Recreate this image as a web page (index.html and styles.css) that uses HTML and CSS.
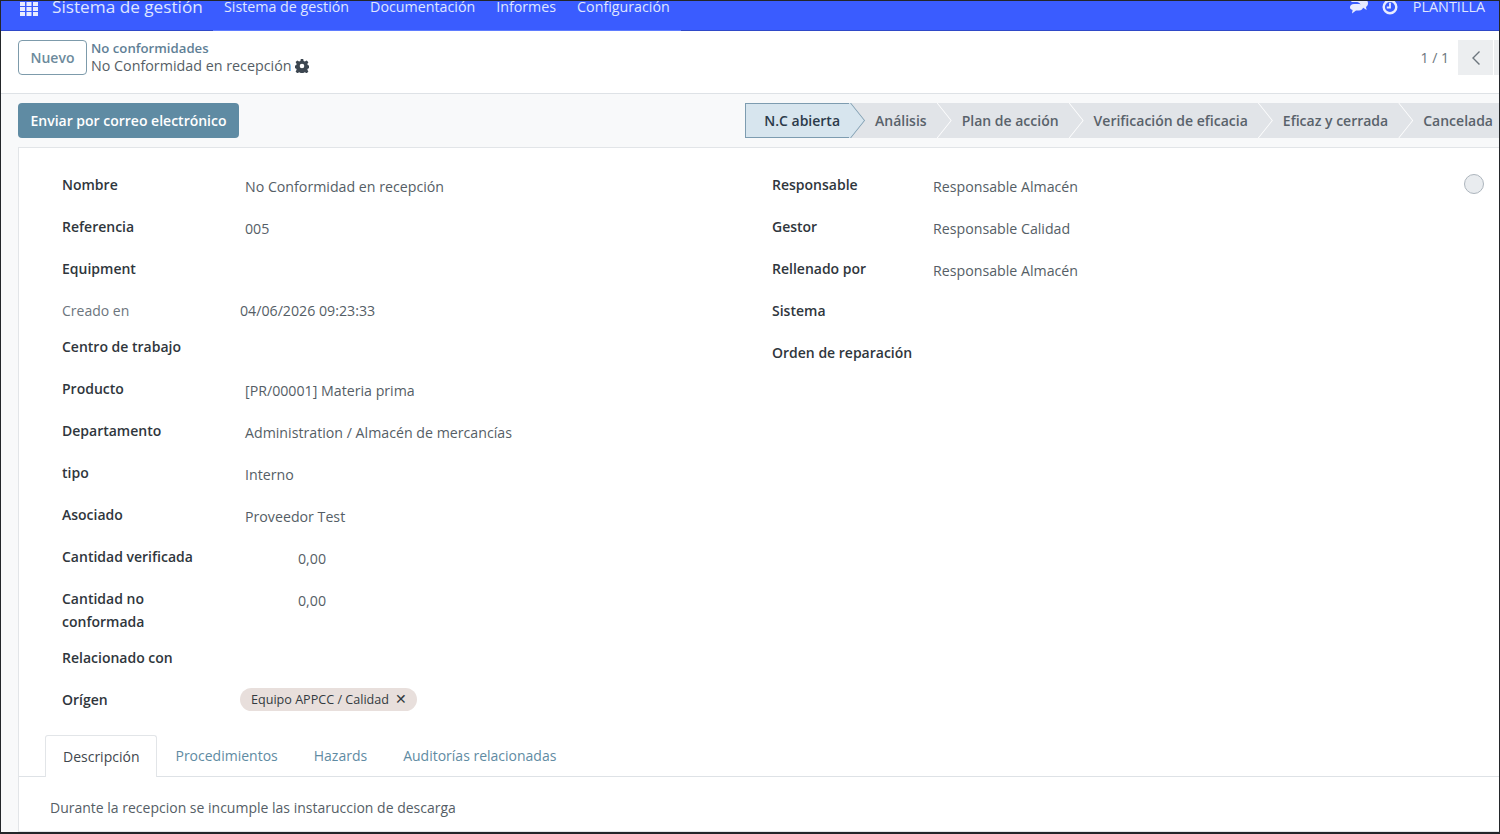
FILE: index.html
```html
<!DOCTYPE html>
<html lang="es">
  <head>
    <meta charset="UTF-8" />
    <title>No Conformidad en recepción</title>
    <link rel="stylesheet" href="styles.css">
  </head>

  <body>
    <div class="screen">
      <header class="navbar">
        <svg class="apps" viewBox="0 0 18 14" width="18" height="14">
          <path d="M0 0h5v4H0zM6.500 0h5v4h-5zM13 0h5v4h-5zM0 5h5v4H0zM6.500 5h5v4h-5zM13 5h5v4h-5zM0 10h5v4H0zM6.500 10h5v4h-5zM13 10h5v4h-5z" fill="#e8ecff" />
        </svg>
        <span class="brand">Sistema de gestión</span>
        <nav class="menu">
          <a>Sistema de gestión</a>
          <a>Documentación</a>
          <a>Informes</a>
          <a>Configuración</a>
        </nav>
        <div class="systray">
          <svg class="icon-chat" viewBox="0 0 20 16" width="20" height="16">
            <path d="M7 0h8c3 0 5 1.600 5 4.200 0 1.800-.8 3-2 3.800l.6 3-3.400-2.300H13c.4-3.500-1.800-5.700-5-5.700H3.200C3.600 1.100 5 0 7 0z" fill="#e8ecff" />
            <path d="M6 5h5c2.500 0 4 1.300 4 3.200s-1.500 3.300-4 3.300H8l-4 3 .6-3.500C2.800 10.500 2 9.500 2 8.200 2 6.300 3.500 5 6 5z" fill="#e8ecff" />
          </svg>
          <svg class="icon-clock" viewBox="0 0 16 16" width="16" height="16">
            <circle cx="8" cy="8" r="6.300" fill="none" stroke="#e8ecff" stroke-width="2.400" />
            <path d="M8 3.800v4.700H4.800" fill="none" stroke="#e8ecff" stroke-width="1.800" />
          </svg>
          <span class="user">PLANTILLA</span>
        </div>
      </header>

      <section class="control">
        <button class="btn-new">Nuevo</button>
        <div class="crumbs">
          <a class="crumb-link">No conformidades</a>
          <div class="crumb-current">
            No Conformidad en recepción
            <svg viewBox="0 0 14 14" width="14" height="14">
              <path d="M5.800 0h2.400l.4 2 1.300.6 1.800-1.100 1.700 1.700-1.100 1.800.6 1.300 2 .4v2.400l-2 .4-.6 1.300 1.100 1.800-1.700 1.700-1.800-1.100-1.300.6-.4 2H5.800l-.4-2-1.300-.6-1.800 1.100L.6 12.500l1.100-1.800-.6-1.300-2-.4V6.600l2-.4.6-1.300L.6 3.100l1.700-1.700 1.800 1.100 1.300-.6zM7 4.700a2.300 2.300 0 1 0 0 4.600 2.300 2.300 0 0 0 0-4.600z" fill="#3c4650" fill-rule="evenodd" />
            </svg>
          </div>
        </div>
        <div class="pager">
          <span>1 / 1</span>
          <div class="pager-btn">
            <svg viewBox="0 0 10 16" width="10" height="16">
              <path d="M8.500 1.500 2 8l6.500 6.500" fill="none" stroke="#6c757d" stroke-width="1.400" />
            </svg>
          </div>
          <div class="pager-btn"></div>
        </div>
      </section>

      <section class="actions">
        <button class="btn-send">Enviar por correo electrónico</button>
        <div class="status">
          <div class="step active">N.C abierta</div>
          <div class="step">Análisis</div>
          <div class="step">Plan de acción</div>
          <div class="step">Verificación de eficacia</div>
          <div class="step">Eficaz y cerrada</div>
          <div class="step">Cancelada</div>
        </div>
      </section>

      <main class="sheet">
        <div class="dot"></div>
        <div class="columns">
          <div class="col-left">
            <div class="row"><label>Nombre</label><span class="val">No Conformidad en recepción</span></div>
            <div class="row"><label>Referencia</label><span class="val">005</span></div>
            <div class="row"><label>Equipment</label></div>
            <div class="row row-short"><label class="muted">Creado en</label><span class="val val-date">04/06/2026 09:23:33</span></div>
            <div class="row"><label>Centro de trabajo</label></div>
            <div class="row"><label>Producto</label><span class="val">[PR/00001] Materia prima</span></div>
            <div class="row"><label>Departamento</label><span class="val">Administration / Almacén de mercancías</span></div>
            <div class="row"><label>tipo</label><span class="val">Interno</span></div>
            <div class="row"><label>Asociado</label><span class="val">Proveedor Test</span></div>
            <div class="row"><label>Cantidad verificada</label><span class="val val-num">0,00</span></div>
            <div class="row row-tall"><label>Cantidad no conformada</label><span class="val val-num">0,00</span></div>
            <div class="row"><label>Relacionado con</label></div>
            <div class="row">
              <label>Orígen</label>
              <span class="tag">Equipo APPCC / Calidad <i>✕</i></span>
            </div>
          </div>
          <div class="col-right">
            <div class="row"><label>Responsable</label><span class="val">Responsable Almacén</span></div>
            <div class="row"><label>Gestor</label><span class="val">Responsable Calidad</span></div>
            <div class="row"><label>Rellenado por</label><span class="val">Responsable Almacén</span></div>
            <div class="row"><label>Sistema</label></div>
            <div class="row"><label>Orden de reparación</label></div>
          </div>
        </div>

        <div class="tabs">
          <a class="tab current">Descripción</a>
          <a class="tab">Procedimientos</a>
          <a class="tab">Hazards</a>
          <a class="tab">Auditorías relacionadas</a>
        </div>
        <p class="desc">Durante la recepcion se incumple las instaruccion de descarga</p>
      </main>
    </div>
  </body>
</html>
```

FILE: styles.css
```css
* {
  margin: 0;
  padding: 0;
  box-sizing: border-box;
}

html,
body {
  height: 834px;
  overflow: hidden;
}

body {
  font-family: "Open Sans", "Noto Sans", sans-serif;
  font-size: 14px;
  color: #555e66;
}

.screen {
  height: 834px;
  display: flex;
  flex-direction: column;
  background: #f8f9fa;
  border: 1px solid #23262a;
  border-bottom-width: 2px;
  overflow: hidden;
}

.navbar {
  flex: 0 0 30px;
  display: flex;
  align-items: flex-start;
  background: #3a5cff;
  color: #dfe5ff;
  box-shadow: inset 0 -1px #2f49c8;
  overflow: hidden;
}

.apps {
  margin: 1px 0 0 19px;
}

.brand {
  margin-left: 14px;
  font-size: 17.200px;
  line-height: 12px;
  width: 161px;
  white-space: nowrap;
}

.menu {
  display: flex;
  height: 30px;
  gap: 21px;
  padding: 0 11px;
  line-height: 12px;
  font-size: 14.250px;
  border-bottom: 1px solid #5f7cff;
  white-space: nowrap;
}

.systray {
  margin-left: auto;
  display: flex;
  align-items: flex-start;
  padding-right: 14px;
  font-size: 14.400px;
  line-height: 12px;
}

.icon-chat {
  margin: -2px 14px 0 0;
}

.icon-clock {
  margin: -2px 15px 0 0;
}

.control {
  flex: 0 0 63px;
  display: flex;
  align-items: flex-start;
  padding: 9px 0 0 17px;
  background: #fff;
  border-bottom: 1px solid #dee2e6;
}

.btn-new {
  width: 69px;
  height: 35px;
  border: 1px solid #7d9bab;
  border-radius: 4px;
  background: #fff;
  color: #6d8a9c;
  font: 600 14px "Open Sans", sans-serif;
}

.crumbs {
  margin-left: 4px;
  margin-top: -1px;
  line-height: 18px;
}

.crumb-link {
  display: block;
  color: #5f7f96;
  font-size: 13.200px;
  font-weight: 600;
}

.crumb-current {
  font-size: 14.300px;
  color: #555e66;
}

.crumb-current svg {
  vertical-align: -2px;
}

.pager {
  margin-left: auto;
  margin-right: -30px;
  display: flex;
  align-items: center;
  gap: 1px;
  height: 35px;
  color: #6c757d;
}

.pager span {
  margin-right: 8px;
}

.pager-btn {
  width: 35px;
  height: 35px;
  background: #eceef0;
  display: flex;
  align-items: center;
  justify-content: center;
}

.actions {
  flex: 0 0 53px;
  display: flex;
  align-items: flex-start;
  justify-content: space-between;
  padding: 9px 0 0 17px;
}

.btn-send {
  width: 221px;
  height: 35px;
  border: none;
  border-radius: 4px;
  background: #5f8ba3;
  color: #fff;
  font: 600 14px "Open Sans", sans-serif;
}

.status {
  display: flex;
  height: 35px;
  margin-right: -24px;
}

.step {
  position: relative;
  padding: 0 10px 0 25px;
  line-height: 35px;
  font-weight: 600;
  font-size: 14px;
  color: #59626b;
  background: #e1e4e8;
  white-space: nowrap;
}

.step:last-child {
  padding-right: 30px;
}

.step:not(:last-child)::before,
.step:not(:last-child)::after {
  content: "";
  position: absolute;
  top: 0;
  width: 15px;
  height: 35px;
  clip-path: polygon(0 0, 1px 0, 100% 50%, 1px 100%, 0 100%);
  z-index: 1;
}

.step::before {
  left: 100%;
  background: #fff;
}

.step::after {
  left: calc(100% - 1px);
  background: #e1e4e8;
}

.step.active {
  padding-left: 18px;
  color: #2b3a4a;
  background: #d7e5ee;
  border: 1px solid #7d9cb0;
  border-right: none;
  line-height: 33px;
}

.step.active::before {
  top: -1px;
  background: #7d9cb0;
}

.step.active::after {
  top: -1px;
  background: #d7e5ee;
}

.sheet {
  flex: 1;
  position: relative;
  margin-left: 17px;
  margin-right: -2px;
  background: #fff;
  border: 1px solid #e2e5e8;
}

.dot {
  position: absolute;
  top: 26px;
  right: 16px;
  width: 20px;
  height: 20px;
  border-radius: 50%;
  background: #e9ecef;
  border: 1px solid #adb5bd;
}

.columns {
  display: flex;
  padding: 25px 0 0 43px;
}

.col-left {
  flex: 0 0 710px;
}

.col-right .row label {
  width: 161px;
  white-space: nowrap;
}

.row {
  display: flex;
  align-items: flex-start;
  height: 42px;
}

.row-short {
  height: 36px;
}

.row-tall {
  height: 59px;
}

label {
  flex: none;
  width: 183px;
  padding-right: 30px;
  line-height: 23px;
  font-weight: 600;
  color: #2f363c;
}

label.muted {
  font-weight: 400;
  color: #6c757d;
}

.val {
  margin-top: 2px;
  line-height: 23px;
  font-size: 14.200px;
}

.val-date {
  margin: 0 0 0 -5px;
}

.val-num {
  margin-left: 53px;
}

.tag {
  margin-left: -5px;
  height: 23px;
  padding: 0 10px 0 11px;
  border-radius: 12px;
  background: #e8dfdc;
  color: #333a40;
  font-size: 12.600px;
  line-height: 23px;
}

.tag i {
  font-style: normal;
  margin-left: 3px;
  font-size: 13.500px;
}

.tabs {
  display: flex;
  height: 42px;
  margin-top: 5px;
  padding-left: 26px;
  border-bottom: 1px solid #dee2e6;
}

.tab {
  padding: 0 18px;
  line-height: 42px;
  color: #5f8ba3;
}

.tab.current {
  height: 42px;
  color: #3f474e;
  background: #fff;
  border: 1px solid #e2e5e8;
  border-bottom: none;
  border-radius: 3px 3px 0 0;
  padding: 0 17px;
  line-height: 41px;
}

.desc {
  padding: 20px 0 0 31px;
  line-height: 21px;
}
```
